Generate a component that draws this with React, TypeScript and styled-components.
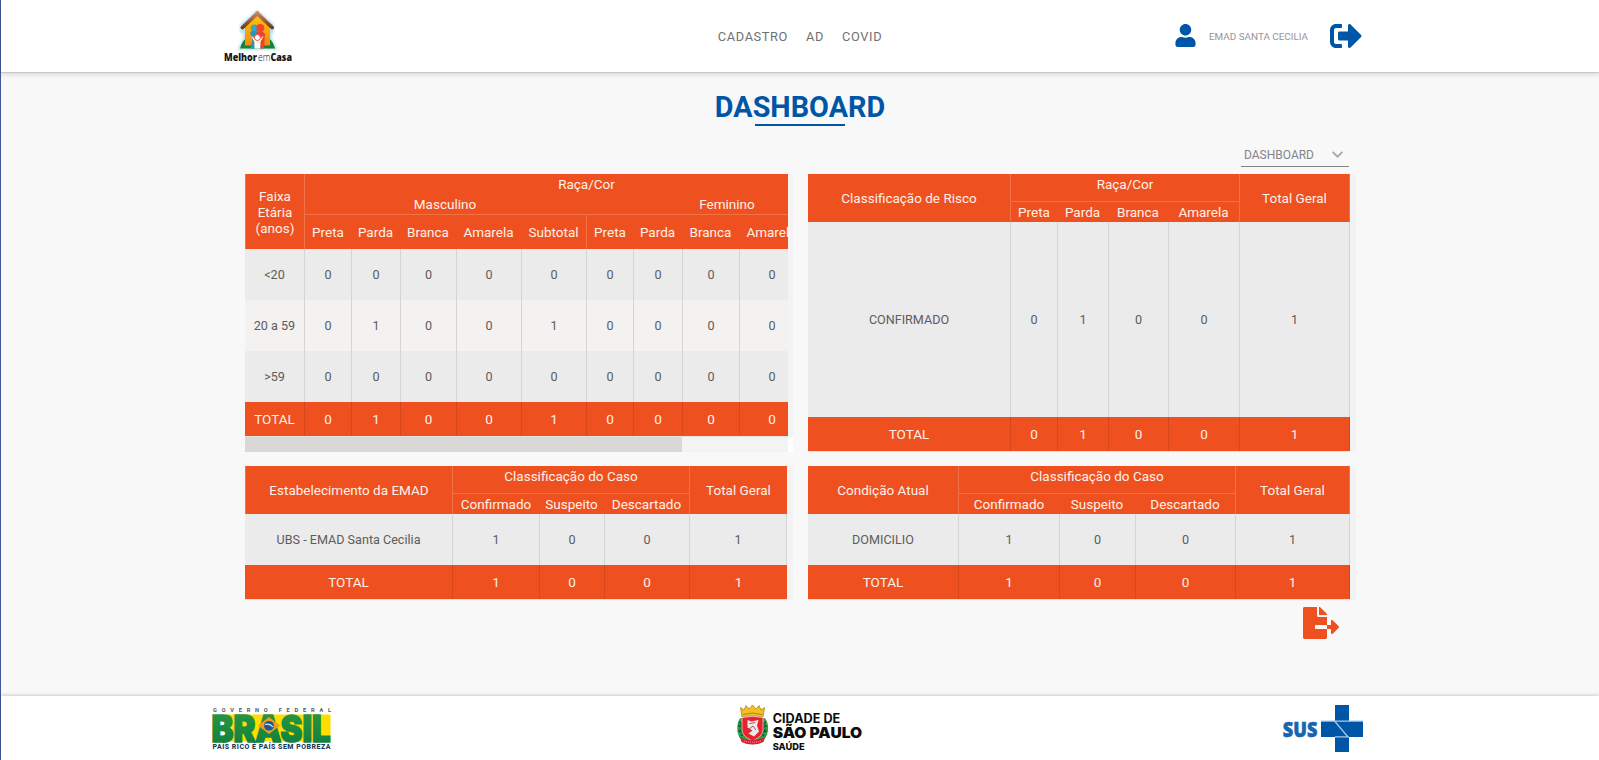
import React from 'react';
import styled, { createGlobalStyle } from 'styled-components';
import { FaUser, FaSignOutAlt, FaFileExport } from 'react-icons/fa';

const GlobalStyle = createGlobalStyle`
  *, *::before, *::after { box-sizing: border-box; }
  html, body { margin: 0; padding: 0; background: #f8f8f8; }
  body { font-family: Roboto, "Liberation Sans", sans-serif; overflow: hidden; }
`;

const orange = '#ee501f';
const blue = '#0056a6';

const Page = styled.div`
  height: 760px;
  display: flex;
  flex-direction: column;
  border-left: 1px solid #43549f;
  background: #f8f8f8;
`;

const TopBar = styled.header`
  height: 72px;
  flex: none;
  padding: 0 221px;
  display: grid;
  grid-template-columns: 1fr auto 1fr;
  align-items: center;
  background: #fff;
  box-shadow: 0 1px 0 #c9c9c9, 0 2px 5px rgba(0, 0, 0, 0.16);
`;

const Logo = styled.svg`
  display: block;
  overflow: visible;
`;

const Nav = styled.nav`
  display: flex;
  gap: 18px;
  padding-top: 2px;
`;

const NavLink = styled.a`
  font-size: 12.8px;
  line-height: 16px;
  letter-spacing: 0.62px;
  color: #707070;
`;

const Account = styled.div`
  display: flex;
  align-items: center;
  justify-content: flex-end;
  padding: 0 16px 1px 0;
  color: ${blue};
`;

const UserName = styled.span`
  margin: 3px 22px 0 12px;
  font-size: 9.9px;
  line-height: 14px;
  color: #959595;
`;

const Main = styled.main`
  flex: 1;
  display: flex;
  flex-direction: column;
  padding: 18px 243px 0 244px;
`;

const Title = styled.h1`
  margin: 0 1px 0 0;
  align-self: center;
  display: flex;
  flex-direction: column;
  align-items: center;
  font-size: 28.8px;
  line-height: 34px;
  font-weight: 700;
  color: ${blue};

  &::after {
    content: '';
    width: 90px;
    height: 2px;
    background: ${blue};
  }
`;

const Picker = styled.button`
  align-self: flex-end;
  width: 108px;
  height: 24px;
  margin: 17px 7px 7px 0;
  padding: 1px 6px 0 3px;
  display: flex;
  align-items: center;
  justify-content: space-between;
  border: 0;
  border-bottom: 1px solid #828282;
  background: none;
  font: 12px Roboto, sans-serif;
  color: #858585;

  svg { margin-bottom: 1px; }
`;

const Panels = styled.div`
  display: grid;
  grid-template-columns: 548px 548px;
  grid-template-rows: 278px 134px;
  gap: 14px 15px;
`;

const Panel = styled.section<{ $inner: number }>`
  display: grid;
  grid-template-columns: ${(p) => p.$inner}px 1fr;
  background: #f3f3f3;
  overflow: hidden;
`;

const Viewport = styled.div`
  overflow: hidden;
  display: flex;
  flex-direction: column;
  border-bottom: 1px solid #e3e3e3;
`;

const ScrollPanel = styled.div`
  display: grid;
  grid-template-rows: 263px 15px;
  overflow: hidden;
`;

const ScrollBar = styled.div`
  display: flex;
  background: #fff;
`;

const Track = styled.div`
  width: 543px;
  background: #f3f3f3;
`;

const Thumb = styled.div`
  width: 437px;
  height: 15px;
  background: #d9d8d6;
`;

const Row = styled.div<{ $cols: string }>`
  display: grid;
  grid-template-columns: ${(p) => p.$cols};
  flex: none;
`;

const HeadRow = styled(Row)<{ $rows: string }>`
  grid-template-rows: ${(p) => p.$rows};
  background: ${orange};
  color: #fff0e9;
  font-size: 13.5px;
  line-height: 16px;
`;

const HeadCell = styled.div<{ $area: string; $line?: boolean; $side?: boolean; $end?: boolean; $top?: boolean }>`
  grid-area: ${(p) => p.$area};
  display: flex;
  justify-content: center;
  align-items: ${(p) => (p.$top ? 'flex-start' : 'center')};
  padding-top: ${(p) => (p.$top ? 2 : 0)}px;
  padding-bottom: ${(p) => (p.$top ? 0 : 1)}px;
  text-align: center;
  white-space: nowrap;
  border: 0 solid #f37245;
  border-top-width: ${(p) => (p.$line ? 1 : 0)}px;
  border-left-width: ${(p) => (p.$side ? 1 : 0)}px;
  border-right-width: ${(p) => (p.$end ? 1 : 0)}px;
`;

const AgeLabel = styled.span`
  width: 44px;
  padding-top: 2px;
  white-space: normal;
`;

const BodyRow = styled(Row)<{ $h: number; $alt?: boolean }>`
  height: ${(p) => p.$h}px;
  background: ${(p) => (p.$alt ? '#f3f2f0' : '#ebebeb')};
  color: #5c5c5c;
  font-size: 12.6px;
`;

const TotalRow = styled(Row)`
  height: 34px;
  background: ${orange};
  color: #fff0e9;
  font-size: 13.5px;
`;

const Cell = styled.div<{ $total?: boolean; $end?: boolean }>`
  display: flex;
  align-items: center;
  justify-content: center;
  padding: ${(p) => (p.$total ? '0 0 1px' : '1px 0 0')};
  line-height: 16px;
  border: 0 solid ${(p) => (p.$total ? '#d6481b' : '#d4d4d4')};
  border-right-width: ${(p) => (p.$end ? 1 : 0)}px;

  & + & { border-left-width: 1px; }
`;

const Export = styled.button`
  align-self: flex-end;
  margin: 7px 17px 0 0;
  padding: 0;
  border: 0;
  background: none;
  color: ${orange};
  line-height: 0;

  svg { width: 36px; height: 32px; }
`;

const Footer = styled.footer`
  height: 64px;
  flex: none;
  padding: 0 211px;
  display: grid;
  grid-template-columns: 1fr auto 1fr;
  align-items: start;
  background: #fff;
  box-shadow: 0 -1px 3px rgba(0, 0, 0, 0.18);
`;

const FooterEnd = styled.div`
  display: flex;
  justify-content: flex-end;
  padding: 7px 24px 0 0;
`;

type Values = (string | number)[];

function Cells({ values, total, end }: { values: Values; total?: boolean; end?: boolean }) {
  return (
    <>
      {values.map((v, i) => (
        <Cell key={i} $total={total} $end={end && i === values.length - 1}>{v}</Cell>
      ))}
    </>
  );
}

function AgeTable() {
  const cols = '59px 47px 49px 56px 65px 65px 47px 49px 57px 65px 64px 52px';
  const groups = ['Preta', 'Parda', 'Branca', 'Amarela', 'Subtotal'];
  const rows: Values[] = [
    ['<20', 0, 0, 0, 0, 0, 0, 0, 0, 0, 0, 0],
    ['20 a 59', 0, 1, 0, 0, 1, 0, 0, 0, 0, 0, 1],
    ['>59', 0, 0, 0, 0, 0, 0, 0, 0, 0, 0, 0],
  ];
  return (
    <ScrollPanel>
      <Panel $inner={543}>
        <Viewport>
          <HeadRow $cols={cols} $rows="20px 20px 35px">
            <HeadCell $area="1 / 1 / 4 / 2" $side><AgeLabel>Faixa Etária (anos)</AgeLabel></HeadCell>
            <HeadCell $area="1 / 2 / 3 / 12" $side $top>Raça/Cor</HeadCell>
            <HeadCell $area="2 / 2 / 3 / 7">Masculino</HeadCell>
            <HeadCell $area="2 / 7 / 3 / 12">Feminino</HeadCell>
            {[...groups, ...groups].map((g, i) => (
              <HeadCell key={i} $area={`3 / ${i + 2} / 4 / ${i + 3}`} $line $side={i % 5 === 0}>{g}</HeadCell>
            ))}
          </HeadRow>
          {rows.map((r, i) => (
            <BodyRow key={i} $cols={cols} $h={51} $alt={i === 1}><Cells values={r} /></BodyRow>
          ))}
          <TotalRow $cols={cols}><Cells total values={['TOTAL', 0, 1, 0, 0, 1, 0, 0, 0, 0, 0, 1]} /></TotalRow>
        </Viewport>
      </Panel>
      <ScrollBar><Track><Thumb /></Track></ScrollBar>
    </ScrollPanel>
  );
}

interface GroupedProps {
  cols: string;
  first: string;
  group: string;
  heads: string[];
  values: Values;
  bodyHeight: number;
  inner: number;
  left?: boolean;
}

function GroupedTable({ cols, first, group, heads, values, bodyHeight, inner, left }: GroupedProps) {
  const last = heads.length + 2;
  return (
    <Panel $inner={inner}>
      <Viewport>
        <HeadRow $cols={cols} $rows="27px 21px">
          <HeadCell $area="1 / 1 / 3 / 2" $side={left}>{first}</HeadCell>
          <HeadCell $area={`1 / 2 / 2 / ${last}`} $side $top>{group}</HeadCell>
          {heads.map((h, i) => (
            <HeadCell key={h} $area={`2 / ${i + 2} / 3 / ${i + 3}`} $line $side={i === 0}>{h}</HeadCell>
          ))}
          <HeadCell $area={`1 / ${last} / 3 / ${last + 1}`} $side $end={!left}>Total Geral</HeadCell>
        </HeadRow>
        <BodyRow $cols={cols} $h={bodyHeight}><Cells values={values} end /></BodyRow>
        <TotalRow $cols={cols}><Cells total end={!left} values={['TOTAL', ...values.slice(1)]} /></TotalRow>
      </Viewport>
    </Panel>
  );
}

function HomeLogo() {
  return (
    <Logo width="72" height="58" viewBox="0 0 72 58">
      <defs>
        <linearGradient id="wall" x1="0" y1="0" x2="0" y2="1">
          <stop offset="0" stopColor="#ffc400" />
          <stop offset="1" stopColor="#f58a0c" />
        </linearGradient>
        <linearGradient id="roof" x1="0" y1="0" x2="0" y2="1">
          <stop offset="0" stopColor="#c98358" />
          <stop offset="1" stopColor="#6f3c22" />
        </linearGradient>
        <filter id="glow" x="-30%" y="-30%" width="160%" height="160%"><feGaussianBlur stdDeviation="1.3" /></filter>
      </defs>
      <path d="M35.3 4 51 18v7h-2v7l5 10H17l5-10v-7h-3v-7z" fill="#b9e3ea" stroke="#b9e3ea" strokeWidth="2" filter="url(#glow)" />
      <path d="M18 41.500c1-4 3-8 6-10h23c3 2 5 6 6 10z" fill="#12843c" />
      <path d="M23 19 35.3 8 48 19v19.500H23z" fill="url(#wall)" />
      <path d="M20.500 20.500 35.300 6.300l14.800 14.200" fill="none" stroke="url(#roof)" strokeWidth="3.8" strokeLinejoin="miter" strokeLinecap="round" />
      <circle cx="32.300" cy="21" r="3.600" fill="#35a9c2" />
      <path d="M28 26c1-3 8-3 9 0v4l-5 2 1 9.500h-4.500l2-10z" fill="#2995b8" />
      <circle cx="38.300" cy="21" r="4" fill="#f4442e" />
      <path d="M34 26c2-2.500 8-2 9 1l-1 14.500h-4l1-9-4-3z" fill="#ee4230" />
      <path d="M29 28.500 32.500 35v6.500h5.800V35l3.500-6.500-3.300 3h-6z" fill="#fff" />
      <circle cx="35.400" cy="30.500" r="3" fill="#fff" stroke="#ef4b35" strokeWidth="1" />
      <g fontFamily='"Open Sans", sans-serif' fontSize="11" fill="#161616">
        <text x="2" y="54.300" fontWeight="800" textLength="33" lengthAdjust="spacingAndGlyphs">Melhor</text>
        <text x="36" y="54.300" fontWeight="300" textLength="12.500" lengthAdjust="spacingAndGlyphs">em</text>
        <text x="48.500" y="54.300" fontWeight="800" textLength="21.500" lengthAdjust="spacingAndGlyphs">Casa</text>
      </g>
    </Logo>
  );
}

function BrasilLogo() {
  return (
    <Logo width="120" height="58" viewBox="0 0 120 58">
      <defs>
        <linearGradient id="leaf" x1="0" y1="0" x2="0" y2="1">
          <stop offset="0" stopColor="#2c9a45" />
          <stop offset="1" stopColor="#0d7c3c" />
        </linearGradient>
      </defs>
      <text x="1" y="16" fontFamily="Roboto, sans-serif" fontSize="5.600" fontWeight="700" fill="#4b5861" textLength="118">GOVERNO FEDERAL</text>
      <rect x="13" y="18.500" width="105.500" height="27" fill="#ffdd00" />
      <text x="-0.500" y="45.500" fontFamily="Inter, sans-serif" fontSize="36.500" fontWeight="900" fill="url(#leaf)" stroke="url(#leaf)" strokeWidth="1.600" textLength="119" lengthAdjust="spacingAndGlyphs">BRASIL</text>
      <path d="m46 29.500 11-8.500 11 8.500-11 8.500z" fill="#f49b1c" />
      <circle cx="57" cy="29.800" r="4.900" fill="#175a9c" />
      <path d="M53 28.500c3-.8 6 0 8 2.500" fill="none" stroke="#d8e8f2" strokeWidth="1.200" />
      <text x="0.500" y="53.300" fontFamily="Roboto, sans-serif" fontSize="7" fontWeight="800" fill="#163c55" textLength="118" lengthAdjust="spacing">PAÍS RICO É PAÍS SEM POBREZA</text>
    </Logo>
  );
}

function SaoPauloLogo() {
  return (
    <Logo width="127" height="58" viewBox="0 0 127 58">
      <path d="M3.500 22C-1 26-1 39 4.500 44l11 4.500 11-4.500c6-5 6-18 1-22z" fill="#2f9a4c" />
      <path d="M2 26l4 2-4 2 4 2-4 3 5 2-3 3M29 26l-4 2 4 2-4 2 4 3-5 2 3 3" fill="none" stroke="#14552c" strokeWidth="1.200" />
      <path d="M3.500 11.500 7 14l2-4.500 3 3.500 3.500-4L19 13l3-3.500 2 4.500 3.500-2.500L26 21q-10.500-3-21 0z" fill="#f2c023" stroke="#a37412" strokeWidth=".7" />
      <path d="M6 18.500q9.500-3 19 0" fill="none" stroke="#b38110" strokeWidth="1" />
      <path d="M5 21.500q10.500-2.500 21 0V33c0 7-6 9.500-10.500 12C11 42.500 5 40 5 33z" fill="#e8232e" stroke="#eee7df" strokeWidth=".7" />
      <path d="m10.500 24 4 1.500 7-1.500-1.500 5.500 2 6-5 5-5.500-3 4-3-5-3z" fill="#e9ecee" />
      <path d="m12.500 27.500 6-1M12 33l4-3 3 4" fill="none" stroke="#c33740" strokeWidth=".9" />
      <path d="M3 41q5 3.500 12.500 3T28 41l-1.500 5q-5 2.500-11 2.500T4.500 46z" fill="#d52431" />
      <path d="M7 45q8 2.500 17 0" fill="none" stroke="#f3c9c6" strokeWidth=".8" strokeDasharray="1 1" />
      <g fontFamily="Inter, sans-serif" fill="#0d0d0d">
        <text x="35.700" y="26.800" fontSize="12.500" fontWeight="700" textLength="67.500" lengthAdjust="spacingAndGlyphs">CIDADE DE</text>
        <text x="35.700" y="42.200" fontSize="14.500" fontWeight="900" textLength="89.500" lengthAdjust="spacingAndGlyphs">SÃO PAULO</text>
        <text x="35.700" y="54" fontSize="9.500" fontWeight="800" textLength="32" lengthAdjust="spacingAndGlyphs">SAÚDE</text>
      </g>
    </Logo>
  );
}

function SusLogo() {
  return (
    <Logo width="82" height="50" viewBox="0 0 82 50">
      <text x="0.800" y="34.300" fontFamily='"Open Sans", sans-serif' fontSize="21.500" fontWeight="800" fill="#1765ae" stroke="#1765ae" strokeWidth=".6" textLength="34.500" lengthAdjust="spacingAndGlyphs">SUS</text>
      <path d="M53 2h14v47H53z" fill={blue} />
      <path d="M39 18h42v16H39z" fill={blue} />
      <path d="M39 18.200h42M53 33.800h14M52.500 18l13.500 16" fill="none" stroke="#a9c8e4" strokeWidth="1.200" />
    </Logo>
  );
}

export default function App() {
  return (
    <Page>
      <GlobalStyle />
      <TopBar>
        <HomeLogo />
        <Nav>
          <NavLink>CADASTRO</NavLink>
          <NavLink>AD</NavLink>
          <NavLink>COVID</NavLink>
        </Nav>
        <Account>
          <FaUser size={23} />
          <UserName>EMAD SANTA CECILIA</UserName>
          <FaSignOutAlt size={32} />
        </Account>
      </TopBar>
      <Main>
        <Title>DASHBOARD</Title>
        <Picker>
          DASHBOARD
          <svg width="11" height="7" viewBox="0 0 11 7" fill="none" stroke="#a3a8ab" strokeWidth="1.700">
            <path d="m.6.800 4.900 4.900L10.400.8" />
          </svg>
        </Picker>
        <Panels>
          <AgeTable />
          <GroupedTable
            cols="202px 47px 51px 60px 71px 111px"
            first="Classificação de Risco"
            group="Raça/Cor"
            heads={['Preta', 'Parda', 'Branca', 'Amarela']}
            values={['CONFIRMADO', 0, 1, 0, 0, 1]}
            bodyHeight={195}
            inner={542}
          />
          <GroupedTable
            cols="207px 87px 65px 85px 98px"
            first="Estabelecimento da EMAD"
            group="Classificação do Caso"
            heads={['Confirmado', 'Suspeito', 'Descartado']}
            values={['UBS - EMAD Santa Cecilia', 1, 0, 0, 1]}
            bodyHeight={51}
            inner={542}
            left
          />
          <GroupedTable
            cols="150px 101px 76px 100px 115px"
            first="Condição Atual"
            group="Classificação do Caso"
            heads={['Confirmado', 'Suspeito', 'Descartado']}
            values={['DOMICILIO', 1, 0, 0, 1]}
            bodyHeight={51}
            inner={542}
          />
        </Panels>
        <Export aria-label="Exportar"><FaFileExport /></Export>
      </Main>
      <Footer>
        <BrasilLogo />
        <SaoPauloLogo />
        <FooterEnd><SusLogo /></FooterEnd>
      </Footer>
    </Page>
  );
}
